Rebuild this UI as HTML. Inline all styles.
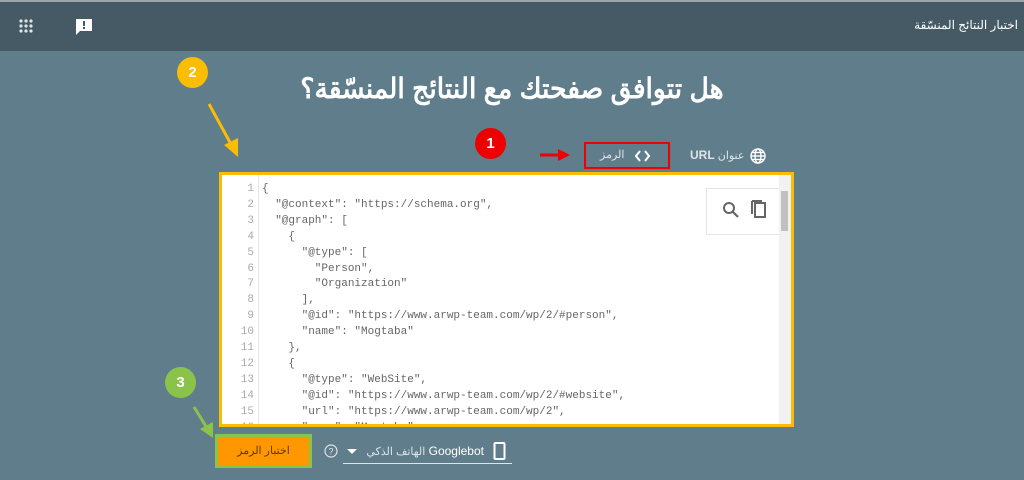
<!DOCTYPE html>
<html><head><meta charset="utf-8"><style>
*{margin:0;padding:0;box-sizing:border-box}
body{width:1024px;height:480px;background:#607d8b;position:relative;overflow:hidden;font-family:"Liberation Sans","Noto Sans CJK SC",sans-serif}
.hdr{position:absolute;left:0;top:0;width:1024px;height:51px;background:#455a64;border-top:2px solid #9aa5ab}
.abs{position:absolute}
.title{position:absolute;left:0;width:1024px;top:72px;text-align:center;color:#fff;font-size:28px;font-weight:bold;direction:rtl;transform:scaleX(0.95)}
.circ{position:absolute;border-radius:50%;color:#fff;font-weight:bold;font-size:15px;text-align:center}
.ed{position:absolute;left:219px;top:172px;width:575px;height:255px;border:3px solid #fbbc04;background:#fff;overflow:hidden}
.gut{position:absolute;left:0;top:0;width:37px;height:100%;border-right:1px solid #e6e6e6}
.code{position:absolute;top:7px;left:0;font-family:"Liberation Mono",monospace;font-size:11px;color:#666;line-height:15.9px;white-space:pre;letter-spacing:0}
.ln{position:absolute;top:7px;left:0;width:32px;text-align:right;font-family:"Liberation Mono",monospace;font-size:11px;color:#aaa;line-height:15.9px;white-space:pre}
</style></head><body>
<div class="hdr"></div>
<svg class="abs" style="left:19px;top:19px" width="14" height="14"><g fill="#dfe4e7"><circle cx="2" cy="2" r="1.6"/><circle cx="7" cy="2" r="1.6"/><circle cx="12" cy="2" r="1.6"/><circle cx="2" cy="7" r="1.6"/><circle cx="7" cy="7" r="1.6"/><circle cx="12" cy="7" r="1.6"/><circle cx="2" cy="12" r="1.6"/><circle cx="7" cy="12" r="1.6"/><circle cx="12" cy="12" r="1.6"/></g></svg>
<svg class="abs" style="left:75px;top:18px" width="18" height="18"><path d="M1 1h16v12H5l-4 4z" fill="#fff"/><rect x="8" y="3" width="2" height="5" fill="#455a64"/><rect x="8" y="9" width="2" height="2" fill="#455a64"/></svg>
<div class="abs" style="right:6px;top:18px;color:#fff;font-size:12px;direction:rtl">اختبار النتائج المنسّقة</div>
<div class="title">هل تتوافق صفحتك مع النتائج المنسّقة؟</div>
<div class="circ" style="left:177px;top:57px;width:31px;height:31px;line-height:31px;background:#fbbc04">2</div>
<svg class="abs" style="left:0;top:0" width="1024" height="480">
<line x1="209" y1="104" x2="232" y2="146" stroke="#fbbc04" stroke-width="3"/><polygon points="238,157 224,145 238,138" fill="#fbbc04"/>
<line x1="540" y1="155" x2="560" y2="155" stroke="#e00" stroke-width="3"/><polygon points="570,155 558,149 558,161" fill="#e00"/>
<line x1="194" y1="407" x2="207" y2="428" stroke="#8bc34a" stroke-width="3"/><polygon points="213,438 200,429 213,422" fill="#8bc34a"/>
<path d="M640 151l-4 5 4 5M645 151l4 5-4 5" stroke="#fff" stroke-width="2" fill="none"/>
</svg>
<div class="circ" style="left:475px;top:128px;width:31px;height:31px;line-height:31px;background:#e00">1</div>
<div class="abs" style="left:584px;top:142px;width:86px;height:27px;border:2px solid #e00"></div>
<div class="abs" style="left:600px;top:148px;color:#dfe4e7;font-size:11px">الرمز</div>
<div class="abs" style="left:690px;top:148px;color:#dfe4e7;font-size:11px"><b style="font-size:12px">URL</b> عنوان</div>
<svg class="abs" style="left:750px;top:148px" width="16" height="16"><g fill="none" stroke="#fff" stroke-width="1.4"><circle cx="8" cy="8" r="7"/><ellipse cx="8" cy="8" rx="3" ry="7"/><line x1="1" y1="8" x2="15" y2="8"/><line x1="2" y1="4.5" x2="14" y2="4.5"/><line x1="2" y1="11.5" x2="14" y2="11.5"/></g></svg>
<div class="ed">
<div class="gut"></div>
<div class="ln">1
2
3
4
5
6
7
8
9
10
11
12
13
14
15
16</div>
<div class="code" style="left:40px">{
  "@context": "https://schema.org",
  "@graph": [
    {
      "@type": [
        "Person",
        "Organization"
      ],
      "@id": "https://www.arwp-team.com/wp/2/#person",
      "name": "Mogtaba"
    },
    {
      "@type": "WebSite",
      "@id": "https://www.arwp-team.com/wp/2/#website",
      "url": "https://www.arwp-team.com/wp/2",
      "name": "Mogtaba",</div>
<div class="abs" style="left:484px;top:13px;width:78px;height:47px;border:1px solid #e4e4e4;background:#fff"></div>
<svg class="abs" style="left:500px;top:26px" width="20" height="20"><circle cx="7" cy="7" r="5" fill="none" stroke="#666" stroke-width="2"/><line x1="11" y1="11" x2="16" y2="16" stroke="#666" stroke-width="2.2"/></svg>
<svg class="abs" style="left:528px;top:23px" width="18" height="22"><path d="M2 3v13" stroke="#666" stroke-width="2" fill="none"/><rect x="5" y="5" width="10" height="14" fill="none" stroke="#666" stroke-width="2"/><path d="M2 3h10" stroke="#666" stroke-width="2"/></svg>
<div class="abs" style="right:0;top:0;width:12px;height:100%;background:#f1f1f1"></div>
<div class="abs" style="right:3px;top:16px;width:7px;height:40px;background:#c1c1c1"></div>
</div>
<div class="circ" style="left:165px;top:367px;width:31px;height:31px;line-height:31px;background:#8bc34a">3</div>
<div class="abs" style="left:215px;top:434px;width:97px;height:34px;border:3px solid #8bc34a;background:#ff9800"></div>
<div class="abs" style="left:215px;top:444px;width:97px;text-align:center;font-size:11px;color:#5a3a00">اختبار الرمز</div>
<svg class="abs" style="left:324px;top:444px" width="14" height="14"><circle cx="7" cy="7" r="6" fill="none" stroke="#dfe4e7" stroke-width="1.2"/><text x="7" y="10.5" font-size="9" text-anchor="middle" fill="#dfe4e7" font-family="Liberation Sans">?</text></svg>
<svg class="abs" style="left:347px;top:449px" width="10" height="6"><polygon points="0,0 10,0 5,5" fill="#fff"/></svg>
<div class="abs" style="right:540px;top:444px;color:#fff;font-size:12px;white-space:nowrap"><span style="font-size:11px;color:#dfe4e7">الهاتف الذكي</span> <b style="font-weight:normal;font-size:12px">Googlebot</b></div>
<svg class="abs" style="left:493px;top:442px" width="14" height="18"><rect x="1.5" y="1" width="10" height="16" rx="1" fill="none" stroke="#fff" stroke-width="2"/></svg>
<div class="abs" style="left:343px;top:463px;width:169px;height:1px;background:#dfe4e7"></div>
</body></html>
